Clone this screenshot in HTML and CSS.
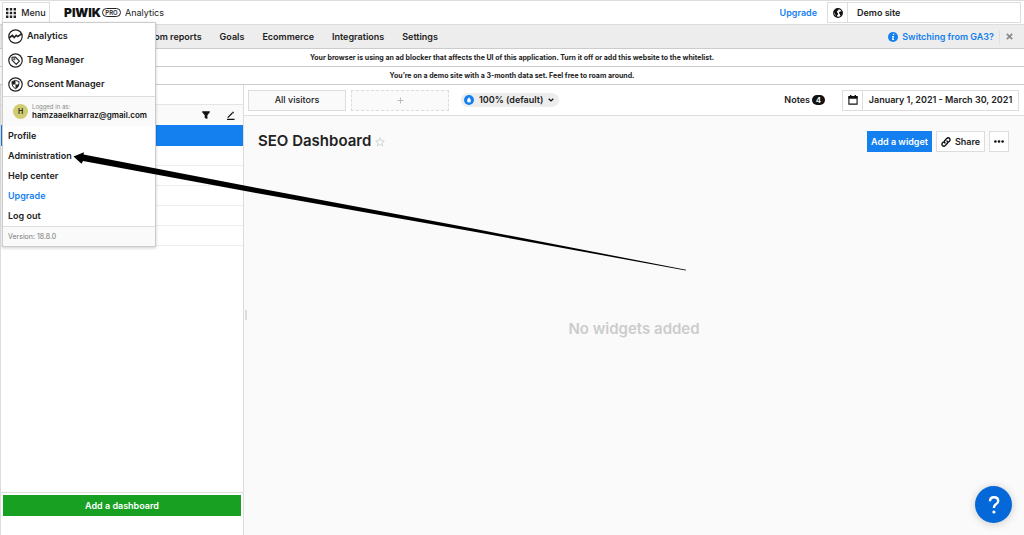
FILE: index.html
```html
<!DOCTYPE html>
<html lang="en">
<head>
<meta charset="utf-8">
<title>SEO Dashboard - Analytics</title>
<link rel="stylesheet" href="styles.css">
</head>
<body>
<div class="app">
  <header class="topbar">
    <button class="menu-button" type="button">
      <svg width="10" height="10" viewBox="0 0 10 10" fill="currentColor"><path d="M0 0h2.4v2.4H0zM3.8 0h2.4v2.4H3.8zM7.6 0H10v2.4H7.6zM0 3.8h2.4v2.4H0zM3.8 3.8h2.4v2.4H3.8zM7.6 3.8H10v2.4H7.6zM0 7.6h2.4V10H0zM3.8 7.6h2.4V10H3.8zM7.6 7.6H10V10H7.6z"/></svg>
      Menu
    </button>
    <div class="brand"><span class="brand-name">PIWIK</span><span class="brand-pro">PRO</span><span class="brand-app">Analytics</span></div>
    <a class="upgrade" href="#">Upgrade</a>
    <button class="site-picker" type="button">
      <span class="box-icon"><svg width="10" height="10" viewBox="0 0 10 10"><circle cx="5" cy="5" r="4.3" fill="#fff" stroke="#111" stroke-width="1.2"/><path d="M.8 3.8 3 1l2.2-.3L5.800 2 4.300 3.100 3.900 4.300 5 5.200 5 6.400 3.900 7.800 3.600 9.300 2.600 8.600 2.300 6.500ZM6.200 4 7.600 3.200 9.300 3.600 9.300 5.800 8 7.800 7 7.600 6.900 6 6 5.300Z" fill="#111"/></svg></span>
      <span class="site-name">Demo site</span>
    </button>
  </header>

  <nav class="nav">
    <a class="nav-custom" href="#">Custom reports</a>
    <a href="#">Goals</a>
    <a href="#">Ecommerce</a>
    <a href="#">Integrations</a>
    <a href="#">Settings</a>
    <a class="switching" href="#">
      <svg width="10" height="10" viewBox="0 0 10 10"><circle cx="5" cy="5" r="5" fill="#1480f0"/><path d="M4.900 1.800h1.300v1.300H4.900zM4 4.100h2l-.6 3h.7v.9H4l.6-3H4z" fill="#fff"/></svg>
      Switching from GA3?
    </a>
    <button class="dismiss" type="button" aria-label="Dismiss"><svg width="7" height="7" viewBox="0 0 6 6"><path d="m.7.7 4.600 4.600M5.300.7.7 5.300" stroke="#8b8b8b" stroke-width="1.500"/></svg></button>
  </nav>

  <p class="notice">Your browser is using an ad blocker that affects the UI of this application. Turn it off or add this website to the whitelist.</p>
  <p class="notice">You’re on a demo site with a 3-month data set. Feel free to roam around.</p>

  <div class="workspace">
    <aside class="sidebar">
      <div class="side-head"></div>
      <div class="side-tools">
        <button type="button" aria-label="Filter"><svg width="8" height="8" viewBox="0 0 8 8"><path d="M.2.3h7.600v1L5.400 4.200V8L2.700 7V4.200L.2 1.300z" fill="#111"/></svg></button>
        <button type="button" aria-label="Edit"><svg width="9" height="9" viewBox="0 0 9 9"><path d="M1 8.400h7.500M1.700 6.600 6.400 2" fill="none" stroke="#111" stroke-width="1.200"/><path d="m6 1.300 1-.8 1 1-.8.9z" fill="#111"/></svg></button>
      </div>
      <ul class="side-list">
        <li class="selected"></li><li></li><li></li><li></li><li></li><li></li>
      </ul>
      <div class="side-foot"><button class="add-dashboard" type="button">Add a dashboard</button></div>
    </aside>

    <main class="main">
      <div class="toolbar">
        <button class="segment" type="button">All visitors</button>
        <button class="segment segment-add" type="button" aria-label="Add segment"><svg width="7" height="7" viewBox="0 0 7 7"><path d="M3.500.5v6M.5 3.500h6" stroke="#bbb"/></svg></button>
        <button class="sampling" type="button">
          <svg width="10" height="10" viewBox="0 0 10 10"><circle cx="5" cy="5" r="5" fill="#1480f0"/><path d="M5 2.200C6 3.500 6.900 4.500 6.900 5.700A1.900 1.900 0 0 1 3.100 5.700C3.100 4.500 4 3.500 5 2.200Z" fill="#fff"/></svg>
          100% (default)
          <svg width="6" height="4" viewBox="0 0 6 4"><path d="m.7.7 2.300 2.200L5.300.7" fill="none" stroke="#111" stroke-width="1.300"/></svg>
        </button>
        <button class="notes" type="button">Notes<span class="count">4</span></button>
        <button class="date-picker" type="button">
          <span class="box-icon"><svg width="10" height="10" viewBox="0 0 10 10"><path d="M.9 1.600h8.200v7.500H.9z" fill="none" stroke="#111" stroke-width="1.100"/><path d="M.5 1.200h9v2.600h-9zM2 0h1.400v2H2zM6.600 0H8v2H6.600z" fill="#111"/></svg></span>
          <span class="date-range">January 1, 2021 - March 30, 2021</span>
        </button>
      </div>

      <div class="title-row">
        <h1>SEO Dashboard</h1>
        <button class="star" type="button" aria-label="Favourite"><svg width="10" height="10" viewBox="0 0 10 10"><path d="m5 .8 1.200 2.900 3.100.2-2.400 2 .8 3.100L5 7.300 2.300 9l.8-3.100-2.400-2 3.100-.2z" fill="none" stroke="#ccc" stroke-width=".8"/></svg></button>
        <div class="actions">
          <button class="primary" type="button">Add a widget</button>
          <button class="share" type="button"><svg width="10" height="10" viewBox="0 0 10 10" fill="none" stroke="#111" stroke-width="1.400" stroke-linecap="round"><path d="M4 5.900C3 4.900 3.300 4 4.100 3.200L5.700 1.600C6.600.7 7.700.7 8.500 1.400 9.300 2.200 9.300 3.300 8.400 4.200L7.500 5.100"/><path d="M6 4.100C7 5.100 6.700 6 5.900 6.800L4.300 8.400C3.400 9.300 2.300 9.300 1.500 8.600.7 7.800.7 6.700 1.600 5.800L2.500 4.900"/></svg>Share</button>
          <button class="more" type="button" aria-label="More"><svg width="10" height="3" viewBox="0 0 10 3" fill="#111"><circle cx="1.400" cy="1.500" r="1.300"/><circle cx="5" cy="1.500" r="1.300"/><circle cx="8.600" cy="1.500" r="1.300"/></svg></button>
        </div>
      </div>
      <p class="empty">No widgets added</p>
      <span class="resizer"></span>
    </main>
  </div>

  <div class="menu">
    <div class="apps">
      <a href="#"><svg width="15" height="15" viewBox="0 0 15 15" fill="none" stroke="#222"><circle cx="7.500" cy="7.500" r="6.700" stroke-width="1.200"/><path d="M1 9 4.400 6.400 6.200 8.600 8.200 6.300 9.700 7.600 14 4.500" stroke-width="1.600"/></svg>Analytics</a>
      <a href="#"><svg width="15" height="15" viewBox="0 0 15 15" fill="none" stroke="#222"><circle cx="7.500" cy="7.500" r="6.700" stroke-width="1.200"/><path d="M4 4.300 7.300 4 11.400 8.100 8.200 11.300 4.100 7.200Z" stroke-width="1.100" stroke-linejoin="round"/><circle cx="6.300" cy="6.200" r=".7"/></svg>Tag Manager</a>
      <a href="#"><svg width="15" height="15" viewBox="0 0 15 15" fill="none" stroke="#222"><circle cx="7.500" cy="7.500" r="6.700" stroke-width="1.200"/><path d="M7.500 3.400 11 4.600C11.200 8 10 10.500 7.500 11.700 5 10.500 3.800 8 4 4.600Z"/><path d="M7.500 3.400V7.500H4L4 4.600ZM7.500 7.500H11C10.800 9.500 9.500 11 7.500 11.700Z" fill="#222" stroke="none"/></svg>Consent Manager</a>
    </div>
    <div class="user">
      <span class="avatar">H</span>
      <div><span class="user-label">Logged in as:</span><span class="user-mail">hamzaaelkharraz@gmail.com</span></div>
    </div>
    <div class="links">
      <a href="#">Profile</a>
      <a href="#">Administration</a>
      <a href="#">Help center</a>
      <a class="accent" href="#">Upgrade</a>
      <a href="#">Log out</a>
    </div>
    <div class="version">Version: 18.8.0</div>
  </div>

  <svg class="pointer" width="614" height="121" viewBox="0 0 614 121"><path d="M.5 6.500 11 2.300 10.500 4.400 183 37.800 400 78.500 613 119.700 612.800 120.500 400 81.500 183 43 10 11 8.500 13.800Z" fill="#000"/></svg>
  <button class="help" type="button" aria-label="Help"><svg width="14" height="20" viewBox="0 0 14 20"><path d="M3 6.200C3 3.600 4.600 2.200 7 2.200S11.200 3.700 11.200 6 9.700 8.800 8.400 9.700C7.200 10.500 6.900 11.200 6.900 12.900" fill="none" stroke="#fff" stroke-width="2.400"/><circle cx="6.900" cy="17" r="1.600" fill="#fff"/></svg></button>
</div>
</body>
</html>
```
FILE: styles.css
```css
* { box-sizing: border-box; }
body { margin: 0; font: 600 9px/12px Inter, "Liberation Sans", sans-serif; color: #222; background: #fff; }
button { font: inherit; color: inherit; margin: 0; padding: 0; border: 0; background: none; border-radius: 0; display: inline-flex; align-items: center; justify-content: center; }
a { color: inherit; text-decoration: none; }
p, h1, ul { margin: 0; padding: 0; }
svg { display: block; flex: none; }
.app { position: relative; min-height: 100vh; display: flex; flex-direction: column; overflow: hidden; }

.topbar { display: flex; align-items: center; height: 24px; padding: 0 3px 0 2px; border-top: 1px solid #ddd; }
.menu-button { height: 22px; width: 48px; gap: 5px; border: 1px solid #ddd; font-weight: 500; }
.brand { display: flex; align-items: center; margin-left: 14px; }
.brand-name { font-size: 12px; font-weight: 900; color: #111; }
.brand-pro { margin-left: 1px; width: 19px; height: 9px; border: 1px solid #222; border-radius: 5px; font-size: 6px; line-height: 7px; text-align: center; }
.brand-app { margin-left: 4px; font-weight: 400; }
.upgrade { margin-left: auto; margin-right: 10px; color: #1480f0; }
.site-picker, .date-picker { border: 1px solid #ddd; height: 21px; background: #fff; justify-content: flex-start; }
.site-picker { width: 194px; }
.box-icon { width: 20px; height: 100%; display: flex; align-items: center; justify-content: center; border-right: 1px solid #ddd; }
.site-name { padding-left: 9px; }

.nav { display: flex; align-items: center; gap: 18px; height: 25px; padding-right: 11px; background: #ededed; border-top: 1px solid #ddd; border-bottom: 1px solid #ccc; }
.nav-custom { margin-left: 134px; }
.switching { margin-left: auto; display: flex; align-items: center; gap: 4px; color: #1480f0; }
.dismiss { margin-left: -13px; padding-left: 6px; height: 14px; border-left: 1px solid #e0e0e0; }
.notice { height: 18px; border-bottom: 1px solid #ccc; font-size: 7px; line-height: 17px; font-weight: 700; text-align: center; }

.workspace { flex: 1; display: grid; grid-template-columns: 244px 1fr; }
.sidebar { display: flex; flex-direction: column; border-left: 1px solid #ddd; border-right: 1px solid #ddd; }
.side-head { height: 20px; border-bottom: 1px solid #e5e5e5; }
.side-tools { height: 20px; display: flex; justify-content: flex-end; align-items: center; gap: 16px; padding-right: 8px; background: #fafafa; }
.side-list { list-style: none; flex: 1; }
.side-list li { height: 20px; border-bottom: 1px solid #eee; }
.side-list .selected { height: 21px; background: #1480f0; border: 0; }
.side-foot { height: 43px; padding: 2px; border-top: 1px solid #ddd; }
.add-dashboard { width: 100%; height: 21px; color: #fff; background: #18a022; }

.main { position: relative; background: #fafafa; }
.toolbar { display: flex; align-items: center; height: 31px; padding: 0 5px 0 4px; background: #fff; border-bottom: 1px solid #ddd; }
.segment { width: 98px; height: 21px; background: #fafafa; border: 1px solid #ddd; font-weight: 500; }
.segment-add { margin-left: 5px; border: 1px dashed #ddd; }
.sampling { margin-left: 12px; height: 14px; padding: 0 5px 0 3px; gap: 5px; border-radius: 7px; background: #ededed; }
.notes { margin-left: auto; gap: 2px; }
.count { width: 13px; height: 10px; border-radius: 5px; background: #111; color: #fff; font-size: 8px; line-height: 10px; text-align: center; }
.date-picker { margin-left: 17px; width: 177px; }
.date-range { flex: 1; text-align: center; white-space: nowrap; }
.title-row { display: flex; align-items: center; padding: 15px 15px 0 14px; }
h1 { font-size: 15px; line-height: 19px; padding-bottom: 2px; font-weight: 600; }
.star { margin-left: 4px; }
.actions { margin-left: auto; display: flex; gap: 4px; }
.primary { width: 65px; height: 21px; background: #1480f0; color: #fff; }
.share, .more { height: 21px; background: #fff; border: 1px solid #ddd; }
.share { width: 49px; gap: 4px; }
.more { width: 20px; }
.empty { margin-top: 167px; text-align: center; font-size: 15px; line-height: 20px; color: #ccc; }
.resizer { position: absolute; left: 1px; top: 225px; width: 2px; height: 10px; background: #ddd; }

.menu { position: absolute; left: 2px; top: 22px; width: 154px; background: #fff; border: 1px solid #ccc; box-shadow: 0 1px 3px rgba(0, 0, 0, .2); }
.apps a { display: flex; align-items: center; gap: 4px; height: 24px; padding-left: 5px; }
.apps { padding-top: 1px; }
.user { display: flex; align-items: center; gap: 4px; height: 30px; padding-left: 10px; border-top: 1px solid #ddd; background: #fafafa; }
.user span { display: block; }
.user .avatar { width: 15px; height: 15px; border-radius: 50%; background: #d0cc72; font-size: 7px; line-height: 15px; text-align: center; }
.user-label { font-size: 6px; line-height: 8px; font-weight: 400; color: #888; }
.user-mail { font-size: 8px; line-height: 9px; color: #111; }
.links a { display: block; height: 20px; padding-left: 5px; line-height: 20px; }
.links .accent { color: #1480f0; }
.version { height: 20px; padding-left: 5px; border-top: 1px solid #ddd; background: #fafafa; font-size: 7px; line-height: 19px; font-weight: 400; color: #777; }
.pointer { position: absolute; left: 73px; top: 150px; pointer-events: none; }
.help { position: absolute; right: 12px; bottom: 12px; width: 37px; height: 37px; border-radius: 50%; background: #0568d8; box-shadow: 0 1px 8px rgba(0, 0, 0, .2); }
```
